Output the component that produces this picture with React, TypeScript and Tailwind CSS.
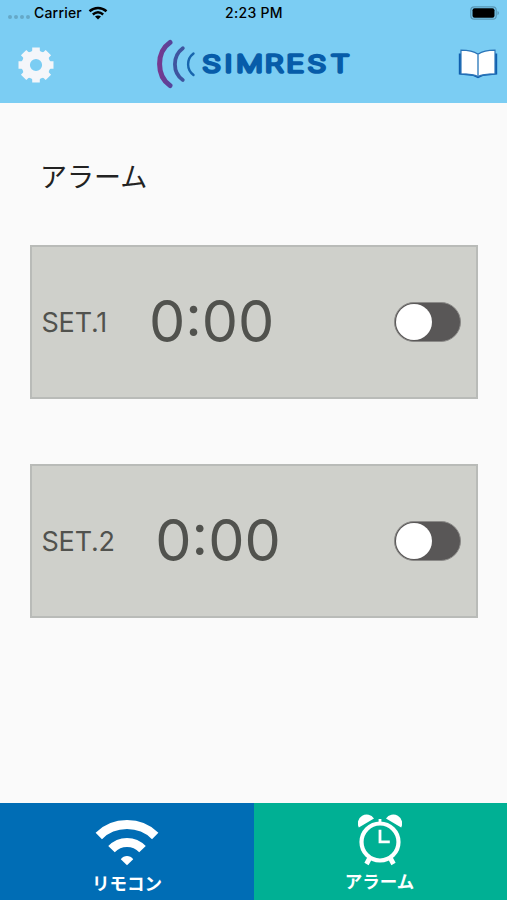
import {useState} from 'react';

const GearIcon = () => (
  <svg width="36" height="36" viewBox="-18 -18 36 36" aria-hidden="true">
    <circle r="10.2" fill="none" stroke="#f4f6fa" strokeWidth="8.2" />
    {[0, 45, 90, 135, 180, 225, 270, 315].map(angle => (
      <path
        key={angle}
        d="M-5.2 -12L-3.8 -14.5V-17.5H3.8V-14.5L5.2 -12Z"
        fill="#f4f6fa"
        transform={`rotate(${angle})`}
      />
    ))}
  </svg>
);

const BookIcon = () => (
  <svg width="40" height="32" viewBox="0 0 40 32" aria-hidden="true">
    <path d="M.8 4.500H39.200V25.500L25 27L20 29.200L15 27L.8 25.500Z" fill="#0f5fae" />
    <path
      d="M3 1.200C9 1.200 16 2.500 20 5.200C24 2.500 31 1.200 37 1.200V24.800C31 24.800 24 25.200 20 27.600C16 25.200 9 24.800 3 24.800Z"
      fill="#fff"
      stroke="#2c75b8"
      strokeWidth="1.200"
    />
    <path d="M20 5.200V27" stroke="#4d8fc6" strokeWidth="1.600" />
  </svg>
);

const Logo = () => (
  <svg width="200" height="52" viewBox="155.500 39 200 52">
    <defs>
      <linearGradient id="wave" x1="0" x2="1" y1="0" y2="0">
        <stop offset="0" stopColor="#76398f" />
        <stop offset="1" stopColor="#57449a" />
      </linearGradient>
    </defs>
    <g fill="none" strokeLinecap="round">
      <path d="M169.500 42.500C155.600 52 155.600 76 169.500 85.500" stroke="url(#wave)" strokeWidth="5" />
      <path d="M182.300 48.200C171.800 56 171.800 72.500 182.300 80" stroke="#3f559f" strokeWidth="3.800" />
      <path d="M193 53.500C185.800 59 185.800 69.500 193 75" stroke="#1865ad" strokeWidth="2.400" />
    </g>
    <text
      transform="scale(1.320 1)"
      x="153 169.800 178.600 200.400 216.600 232.700 250.300"
      y="72.400"
      className="font-['Inter',sans-serif] text-[22.5px] font-thin"
      fill="#075ca9"
      stroke="#075ca9"
      strokeWidth="3.600"
      strokeLinejoin="round"
      strokeLinecap="round"
    >
      SIMREST
    </text>
  </svg>
);

const SignalIcon = () => (
  <svg width="20" height="14" viewBox="0 0 20 14" fill="none" aria-hidden="true">
    <path d="M1.500 5.300C6.500 .900 13.500 .900 18.500 5.300" stroke="#000" strokeWidth="2.500" />
    <path d="M4.800 8.500C8 5.800 12 5.800 15.200 8.500" stroke="#000" strokeWidth="2.400" />
    <path d="M7 10.600C8.700 9.200 11.300 9.200 13 10.600L10 13.500Z" fill="#000" />
  </svg>
);

const BatteryIcon = () => (
  <svg width="30" height="14" viewBox="0 0 30 14" aria-hidden="true">
    <rect x=".8" y=".8" width="25.400" height="12.400" rx="3.500" fill="none" stroke="#5796b5" strokeWidth="1.200" />
    <rect x="2.500" y="2.300" width="22" height="9.400" rx="2" fill="#000" />
    <path d="M27.500 5V9.200C29.400 8.500 29.400 5.700 27.500 5Z" fill="#5796b5" />
  </svg>
);

const RemoteIcon = () => (
  <svg width="64" height="48" viewBox="0 0 64 48" fill="none" aria-hidden="true">
    <path d="M3.800 18C19 2.800 45 2.800 60.200 18" stroke="#fff" strokeWidth="9" />
    <path d="M16.500 31.200C25 22.200 39 22.200 47.500 31.200" stroke="#fff" strokeWidth="9" />
    <path d="M25.800 41.200C29 37 35 37 38.200 41.200L32 47.200Z" fill="#fff" />
  </svg>
);

const ClockIcon = () => (
  <svg width="44" height="52" viewBox="0 0 44 52" fill="none" aria-hidden="true">
    <path d="M.8 13.500A8.850 8.850 0 0 1 16 4.500Z" fill="#fff" />
    <path d="M43.200 13.500A8.850 8.850 0 0 0 28 4.500Z" fill="#fff" />
    <circle cx="22" cy="28" r="18.500" stroke="#fff" strokeWidth="4.200" />
    <path d="M22 5V9.500" stroke="#fff" strokeWidth="2.800" />
    <path d="M22 15.700V27.800H31.800" stroke="#fff" strokeWidth="2.800" />
    <path d="M12 43.500L8.500 50M32 43.500L35.500 50" stroke="#fff" strokeWidth="4.800" />
  </svg>
);

interface SwitchProps {
  label: string;
  checked: boolean;
  onChange: (checked: boolean) => void;
}

const Switch = (props: SwitchProps) => (
  <button
    type="button"
    role="switch"
    aria-label={props.label}
    aria-checked={props.checked}
    onClick={() => props.onChange(!props.checked)}
    className={`flex h-10 w-[67px] items-center rounded-full border border-[#8b8a88] p-px ${
      props.checked ? 'justify-end bg-[#00b094]' : 'justify-start bg-[#595757]'
    }`}
  >
    <span className="size-9 rounded-full bg-white" />
  </button>
);

const AlarmCard = (props: {name: string; time: string}) => {
  const [enabled, setEnabled] = useState(false);

  return (
    <article className="flex h-[154px] items-center border-2 border-[#b9bbb8] bg-[#cfd0cb] pl-[9.5px] pr-[15px] text-[#51524e]">
      <h2 className="min-w-[67px] text-[27px] leading-none tracking-[-0.2px]">{props.name}</h2>
      <p className="ml-[40.5px] text-[57.5px] leading-none">{props.time}</p>
      <div className="ml-auto">
        <Switch label={props.name} checked={enabled} onChange={setEnabled} />
      </div>
    </article>
  );
};

export default function App() {
  return (
    <div className="flex h-[900px] w-[507px] flex-col overflow-hidden bg-[#fafafa] font-['Inter','Noto_Sans_CJK_JP',sans-serif]">
      <header className="h-[103px] bg-[#7bcdf3]">
        <div className="grid h-[26px] grid-cols-3 items-center pl-2 pr-[7px] text-[14px] font-medium text-black">
          <div className="flex items-center">
            <div className="mt-2 flex gap-0.5">
              {[1, 2, 3, 4].map(dot => (
                <span key={dot} className="size-1 rounded-full bg-[#65a8c8]" />
              ))}
            </div>
            <span className="mb-0.5 ml-1 mr-1.5 tracking-[0.2px]">Carrier</span>
            <SignalIcon />
          </div>
          <span className="mb-0.5 text-center tracking-[0.3px]">2:23 PM</span>
          <div className="flex justify-end">
            <BatteryIcon />
          </div>
        </div>
        <div className="flex h-[77px] items-center justify-between pl-[17.5px] pr-[9px]">
          <GearIcon />
          <Logo />
          <BookIcon />
        </div>
      </header>
      <main className="flex-1 pl-[30px] pr-[29px]">
        <h1 className="flex h-[142px] items-center pl-2.5 pt-2 text-[27px] font-normal text-[#222]">
          アラーム
        </h1>
        <div className="flex flex-col gap-[65px]">
          <AlarmCard name="SET.1" time="0:00" />
          <AlarmCard name="SET.2" time="0:00" />
        </div>
      </main>
      <nav className="grid h-[97px] grid-cols-[254px_1fr] text-[17.5px] font-bold leading-none text-white">
        <a href="#remote" className="flex flex-col items-center bg-[#006db5] pt-[15px]">
          <RemoteIcon />
          <span className="mt-[9px]">リモコン</span>
        </a>
        <a href="#alarm" className="flex flex-col items-center bg-[#00b094] pr-[2px] pt-[11px]">
          <ClockIcon />
          <span className="mt-[7px]">アラーム</span>
        </a>
      </nav>
    </div>
  );
}
